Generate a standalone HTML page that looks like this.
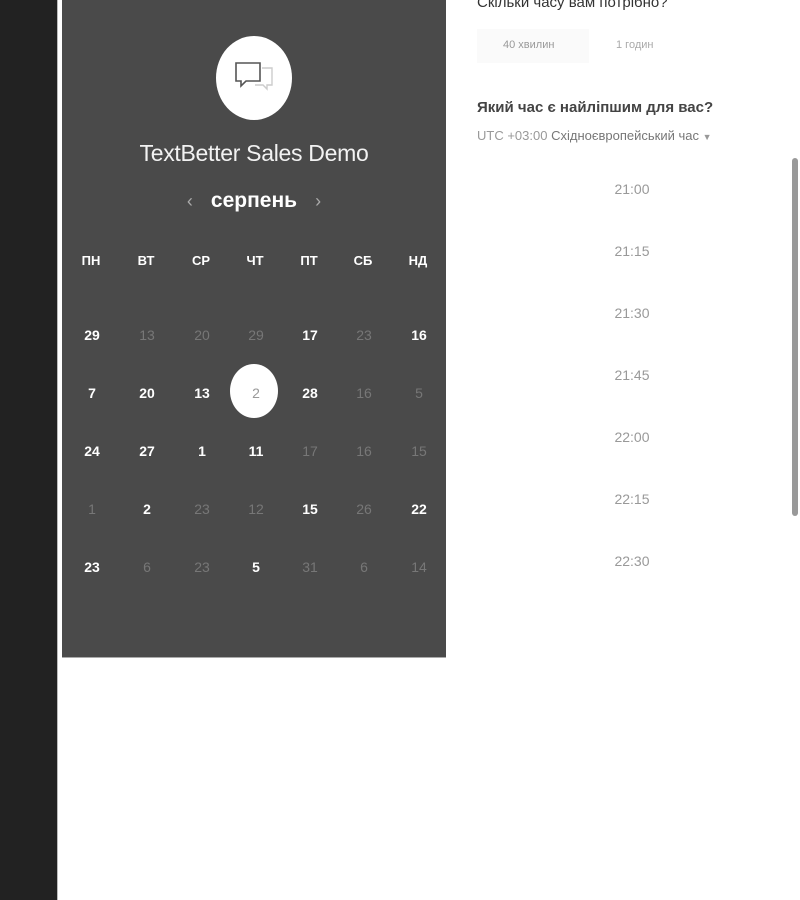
<!DOCTYPE html>
<html><head><meta charset="utf-8"><style>
*{margin:0;padding:0;box-sizing:border-box}
body{width:800px;height:900px;background:#fff;position:relative;overflow:hidden;font-family:"Liberation Sans","DejaVu Sans",sans-serif}
.side{position:absolute;left:0;top:0;width:58px;height:900px;background:#222;border-right:1px solid #bbb}
.panel{position:absolute;left:62px;top:0;width:384px;height:658px;background:#4a4a4a;border-bottom:1px solid #aaa}
.logo{position:absolute;left:154px;top:36px;width:76px;height:84px;border-radius:50%;background:#fff}
.title{position:absolute;left:0;width:384px;top:140px;text-align:center;color:#f2f2f2;font-size:23px;letter-spacing:-0.3px}
.month{position:absolute;left:0;width:384px;top:189px;text-align:center;color:#fff;font-size:21px;font-weight:bold}
.month span{color:#aaa;font-weight:normal;font-size:18px;margin:0 18px}
.d{position:absolute;width:40px;margin-left:-20px;text-align:center;font-size:14px;font-weight:600;color:#fff}
.g{color:#777;font-weight:normal}
.sel{position:absolute;left:168px;top:364px;width:48px;height:54px;border-radius:50%;background:#fff}
.t{position:absolute;font-size:15px;color:#333}
.slot{position:absolute;width:800px;text-align:center;font-size:14px;color:#999}
</style></head><body>
<div class="side"></div>
<div class="panel">
<div class="logo"><svg width="76" height="84" viewBox="0 0 76 84"><path d="M20 27h24v18H30l-5 5v-5h-5z" fill="none" stroke="#555" stroke-width="1.6"/><path d="M46 32h10v17h-5v4l-4-4h-8" fill="none" stroke="#ccc" stroke-width="1.4"/></svg></div>
<div class="title">TextBetter Sales Demo</div>
<div class="month"><span>‹</span>серпень<span>›</span></div>
<div class="sel"></div>
</div>
<div id="cal"></div>
<div class="t" style="left:477px;top:-6px;font-size:15px;color:#333">Скільки часу вам потрібно?</div>
<div style="position:absolute;left:477px;top:29px;width:112px;height:34px;background:#fafafa"></div>
<div class="t" style="left:503px;top:39px;font-size:11px;color:#999">40 хвилин</div>
<div class="t" style="left:616px;top:39px;font-size:11px;color:#aaa">1 годин</div>
<div class="t" style="left:477px;top:99px;font-size:15px;color:#444;font-weight:bold">Який час є найліпшим для вас?</div>
<div class="t" style="left:477px;top:128px;font-size:13px;color:#999">UTC +03:00 <span style="color:#777">Східноєвропейський час</span> <span style="font-size:9px">▼</span></div>
<div style="position:absolute;left:792px;top:158px;width:6px;height:358px;background:#999;border-radius:3px"></div>
<div class="slot" style="top:181px;left:232px">21:00</div>
<div class="slot" style="top:243px;left:232px">21:15</div>
<div class="slot" style="top:305px;left:232px">21:30</div>
<div class="slot" style="top:367px;left:232px">21:45</div>
<div class="slot" style="top:429px;left:232px">22:00</div>
<div class="slot" style="top:491px;left:232px">22:15</div>
<div class="slot" style="top:553px;left:232px">22:30</div>
<script>
var xs=[91,146,201,255,309,363,418];
var h=["ПН","ВТ","СР","ЧТ","ПТ","СБ","НД"];
var rows=[["29","13g","20g","29g","17","23g","16"],["7","20","13","2s","28","16g","5g"],["24","27","1","11","17g","16g","15g"],["1g","2","23g","12g","15","26g","22"],["23","6g","23g","5","31g","6g","14g"]];
var o="";
h.forEach(function(t,i){o+='<div class="d" style="left:'+xs[i]+'px;top:253px;font-size:13px;font-weight:bold">'+t+'</div>'});
rows.forEach(function(r,j){r.forEach(function(v,i){var c="d",n=v.replace(/[gs]/,"");var st="";if(v.indexOf("g")>0)c+=" g";if(v.indexOf("s")>0)st="color:#999;font-weight:normal;";o+='<div class="'+c+'" style="'+st+'left:'+(xs[i]+1)+'px;top:'+(327+58*j)+'px">'+n+'</div>'})});
document.getElementById("cal").innerHTML=o;
</script>
</body></html>
